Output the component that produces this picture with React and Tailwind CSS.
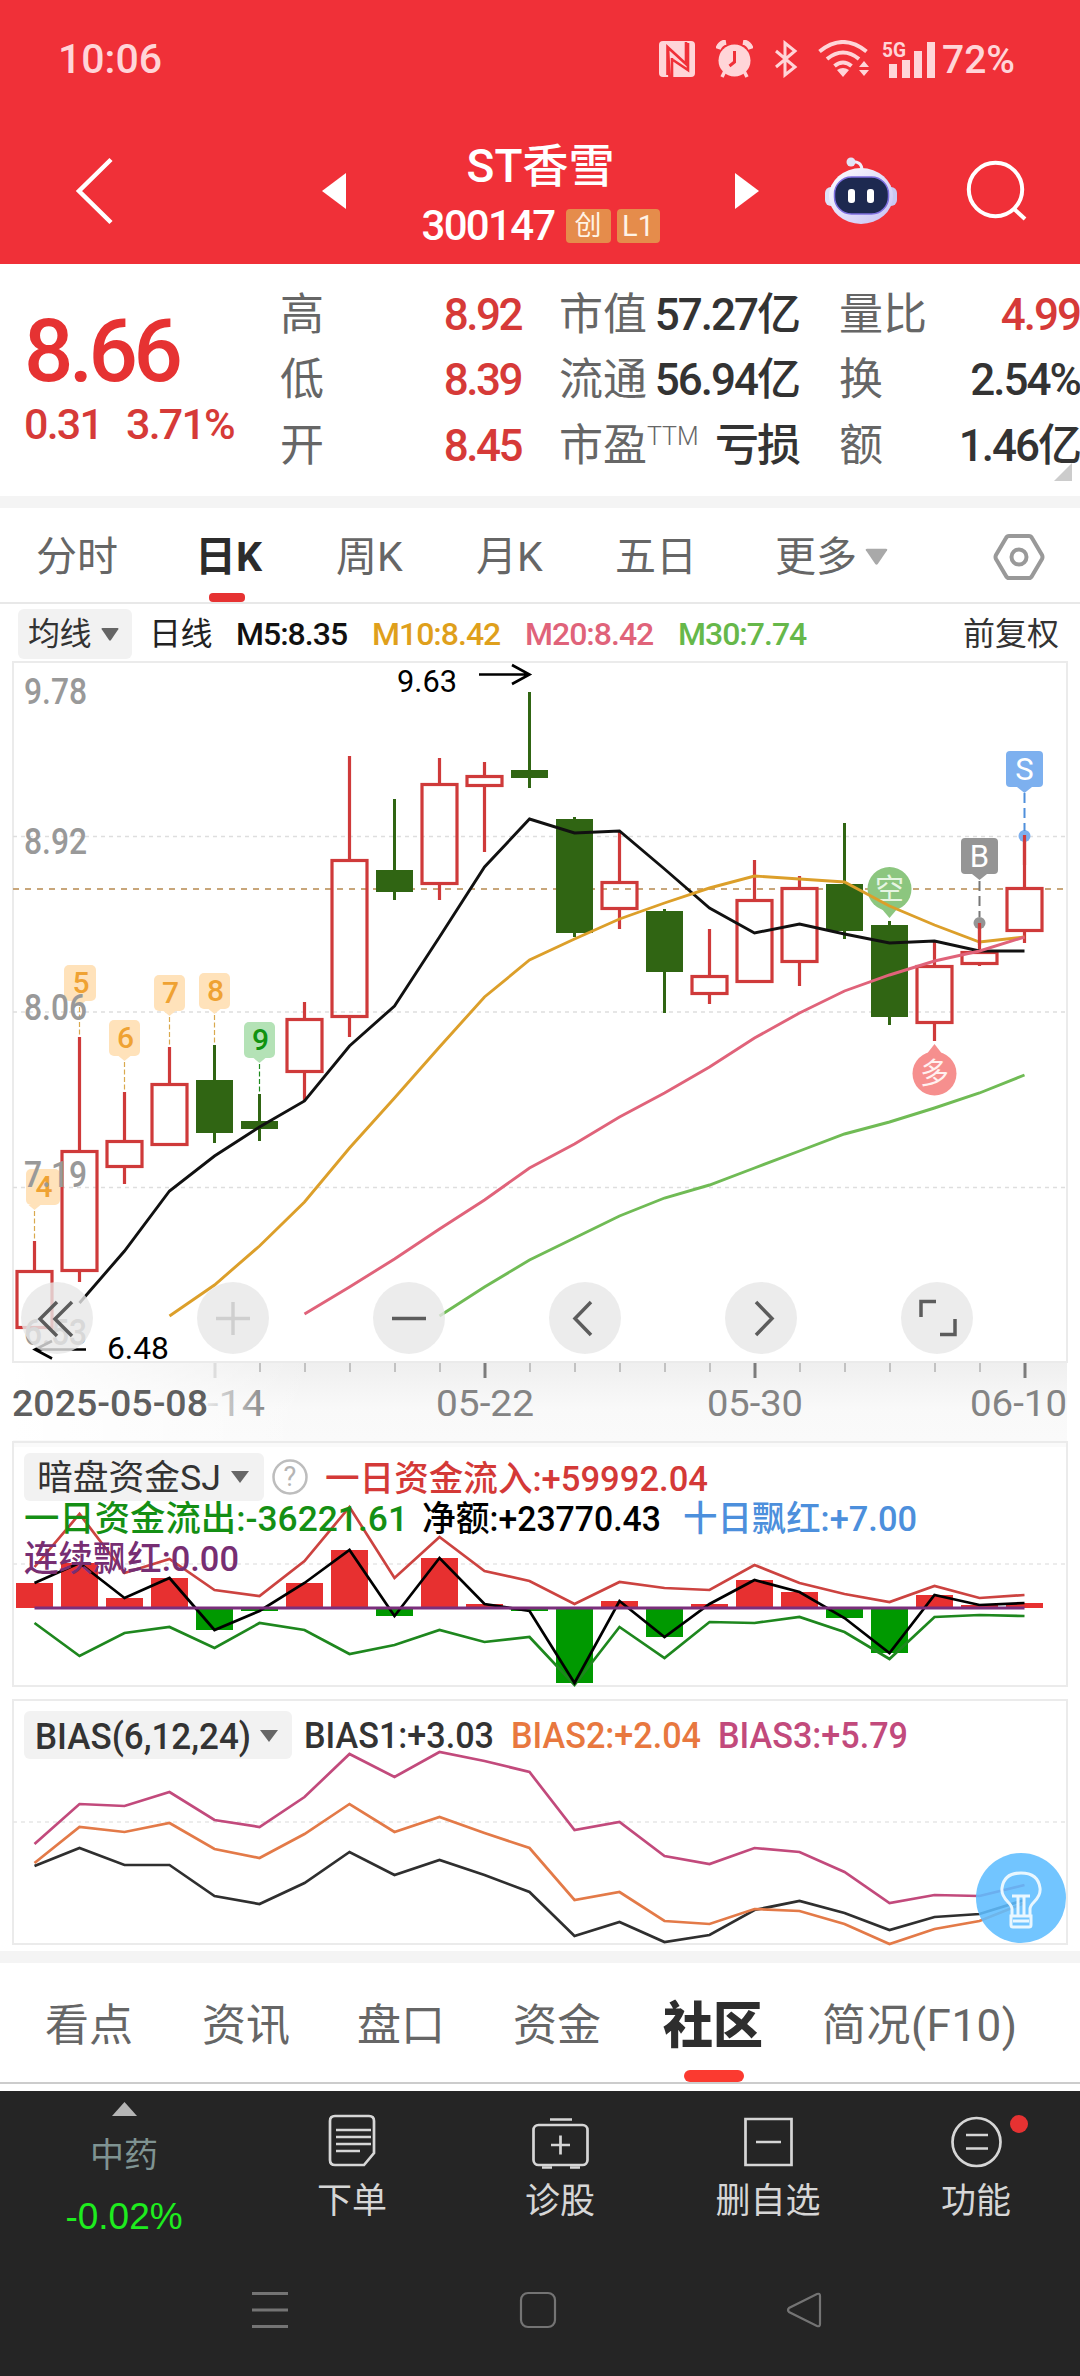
import React from 'react';

const xAt = (i) => 34.5 + i * 45;

const linePoints = (values, from = 0) => values.map((y, k) => `${xAt(from + k)},${y}`).join(' ');

// [direction, high, body top, body bottom, low]
const candles = [
  ['up', 1241, 1270, 1329, 1329],
  ['up', 1037, 1150, 1272, 1282],
  ['up', 1092, 1140, 1168, 1184],
  ['up', 1047, 1083, 1146, 1146],
  ['down', 1045, 1080, 1133, 1143],
  ['down', 1094, 1121, 1129, 1141],
  ['up', 1002, 1018, 1073, 1101],
  ['up', 756, 859, 1018, 1037],
  ['down', 799, 870, 892, 900],
  ['up', 758, 783, 885, 900],
  ['up', 762, 775, 787, 852],
  ['down', 692, 770, 778, 788],
  ['down', 817, 819, 933, 937],
  ['up', 832, 881, 910, 929],
  ['down', 909, 911, 972, 1013],
  ['up', 929, 975, 995, 1004],
  ['up', 860, 899, 983, 983],
  ['up', 876, 887, 963, 986],
  ['down', 823, 884, 931, 939],
  ['down', 921, 925, 1017, 1025],
  ['up', 942, 965, 1024, 1041],
  ['up', 923, 951, 965, 966],
  ['up', 835, 887, 932, 943],
];

const averages = [
  { color: '#111111', from: 1, values: [1303, 1251, 1191, 1156, 1127, 1101, 1046, 1006, 937, 867, 819, 833, 831, 869, 908, 933, 924, 934, 943, 941, 951, 951] },
  { color: '#dc9f2a', from: 3, values: [1316, 1285, 1246, 1202, 1148, 1098, 1047, 997, 960, 939, 919, 903, 888, 876, 879, 882, 906, 925, 942, 937] },
  { color: '#e0637a', from: 6, values: [1314, 1287, 1259, 1229, 1200, 1168, 1144, 1117, 1093, 1067, 1038, 1013, 991, 975, 961, 951, 937] },
  { color: '#70bb55', from: 9, values: [1316, 1287, 1260, 1238, 1216, 1198, 1185, 1168, 1151, 1134, 1122, 1108, 1093, 1075] },
];

const netFlow = [1583, 1563, 1598, 1578, 1630, 1611, 1583, 1550, 1616, 1558, 1604, 1611, 1683, 1601, 1637, 1604, 1580, 1592, 1618, 1653, 1595, 1605, 1603];
const inFlow = [1567, 1514, 1573, 1559, 1590, 1596, 1561, 1507, 1578, 1537, 1571, 1581, 1604, 1582, 1588, 1590, 1565, 1583, 1594, 1602, 1586, 1598, 1595];
const outFlow = [1623, 1656, 1633, 1627, 1648, 1623, 1630, 1654, 1645, 1630, 1642, 1637, 1685, 1627, 1658, 1622, 1623, 1617, 1632, 1659, 1617, 1615, 1616];

const bias = [
  { color: '#c24a7c', values: [1844, 1804, 1806, 1792, 1820, 1827, 1797, 1754, 1777, 1752, 1761, 1772, 1830, 1822, 1856, 1864, 1848, 1852, 1872, 1903, 1895, 1896, 1885] },
  { color: '#2f2f2f', values: [1866, 1848, 1865, 1865, 1896, 1904, 1883, 1852, 1875, 1860, 1875, 1892, 1936, 1922, 1942, 1935, 1910, 1901, 1913, 1930, 1917, 1914, 1900] },
  { color: '#e37a48', values: [1863, 1827, 1832, 1823, 1849, 1858, 1834, 1804, 1832, 1817, 1833, 1848, 1900, 1892, 1921, 1924, 1909, 1911, 1924, 1944, 1929, 1921, 1903] },
];

// nine-turn counters above the first candles
const counters = [
  { n: 4, x: 26, y: 1169, w: 34, i: 0, to: 1241 },
  { n: 5, x: 64, y: 965, w: 32, i: 1, to: 1037 },
  { n: 6, x: 109, y: 1020, w: 31, i: 2, to: 1092 },
  { n: 7, x: 154, y: 975, w: 31, i: 3, to: 1047 },
  { n: 8, x: 199, y: 973, w: 31, i: 4, to: 1045 },
  { n: 9, x: 244, y: 1022, w: 31, i: 5, to: 1094 },
];

function T({ x, y, w, size = 35, fill, weight = 400, children }) {
  return (
    <text x={x} y={y} textLength={w} lengthAdjust="spacingAndGlyphs" fontSize={size} fontWeight={weight} fill={fill}>
      {children}
    </text>
  );
}

function Caret({ className }) {
  return (
    <svg viewBox="0 0 18 13" className={className} fill="currentColor">
      <path d="M1.5 0h15q1.5 0 .8 1.3L10 12q-1 1.3-2 0L.7 1.3Q0 0 1.5 0z" />
    </svg>
  );
}

function StatusBar() {
  return (
    <div className="flex h-[118px] items-center pl-[58px] text-[#ffd5d8]">
      <span className="w-[601px] text-[41px] leading-none font-medium">10:06</span>
      <svg viewBox="659 41 37 36" className="h-9 w-[37px]">
        <rect x="659" y="41" width="36" height="36" rx="4" fill="currentColor" />
        <path d="M667.500 75V47l18.500 17V42.500M668 48l1.500 29M672 58v19M686 42v22M673 60l15 10V43" stroke="#f03038" strokeWidth="2.600" fill="none" />
      </svg>
      <svg viewBox="715 40 37 38" className="ml-5 h-[38px] w-[37px]">
        <circle cx="733.500" cy="60.500" r="16" fill="currentColor" />
        <path d="M717 49q2-6 8-7M742 42q6 1 8 7" stroke="currentColor" strokeWidth="5.500" fill="none" />
        <path d="M724 71l-3 6M743 71l3 6" stroke="currentColor" strokeWidth="3.500" />
        <path d="M733.500 51v11l-5 4" stroke="#f03038" strokeWidth="3" fill="none" />
      </svg>
      <svg viewBox="773 40 24 38" className="ml-[21px] h-[38px] w-6" fill="none" stroke="currentColor" strokeWidth="3">
        <path d="M775 51l19 16-10 8V43l10 8-19 16" />
      </svg>
      <svg viewBox="817 40 52 38" className="ml-5 h-[38px] w-[52px]" fill="none" stroke="currentColor" strokeWidth="4">
        <path d="M818.500 51.500q23.500-19 47 0M826 59q16-13 32 0M833.500 66q8.500-7 17 0" />
        <path d="M836 70q6-4 12 0l-6 7zM858 67l5-6 5 6zM858 70l5 6 5-6z" fill="currentColor" stroke="none" />
      </svg>
      <svg viewBox="881 38 54 40" className="ml-3 h-10 w-[54px]" fill="currentColor">
        <text x="881" y="56" fontSize="20" fontWeight="700" textLength="24" lengthAdjust="spacingAndGlyphs">5G</text>
        <path d="M888 63h8v14h-8zM901 59h8v18h-8zM913 50h8v27h-8zM926 41h8v36h-8z" />
      </svg>
      <span className="ml-1.5 pt-0.5 text-[39px] leading-none font-medium">72%</span>
    </div>
  );
}

function TitleBar() {
  return (
    <div className="flex h-[146px] items-center text-white">
      <svg viewBox="70 150 50 80" className="ml-[70px] h-20 w-[50px]" fill="none" stroke="white" strokeWidth="4.500">
        <path d="M111 158.500L79 190l32 31.500" />
      </svg>
      <svg viewBox="0 0 24 36" className="ml-[202px] h-9 w-6" fill="white"><path d="M24 0v36L0 18z" /></svg>
      <div className="flex w-[389px] flex-col items-center">
        <div className="h-[62px] text-[46px] leading-[56px] font-medium">ST香雪</div>
        <div className="mt-2 flex h-9 items-center">
          <span className="mr-[11px] text-[42px] leading-none font-medium tracking-[-1.700px]">300147</span>
          <span className="flex h-[34px] w-[45px] items-center justify-center rounded bg-[#e58c4b] text-[27px] leading-none text-[#fff3e6]">创</span>
          <span className="ml-1.5 flex h-[34px] w-[43px] items-center justify-center rounded bg-[#e58c4b] text-[29px] leading-none text-[#fff3e6]">L1</span>
        </div>
      </div>
      <svg viewBox="0 0 24 36" className="h-9 w-6" fill="white"><path d="M0 0v36l24-18z" /></svg>
      <svg viewBox="824 154 74 70" className="ml-[65px] h-[70px] w-[74px]">
        <defs>
          <linearGradient id="shell" x1="0" y1="0" x2="1" y2="1">
            <stop offset="0" stopColor="#ffffff" />
            <stop offset="1" stopColor="#c6c0f4" />
          </linearGradient>
        </defs>
        <path d="M850 160q12-2 12 9" fill="none" stroke="#f1eefc" strokeWidth="3" />
        <circle cx="851" cy="160" r="4.500" fill="#e3e3f6" />
        <rect x="825" y="185" width="14" height="19" rx="6" fill="#dfe2f8" />
        <rect x="883" y="185" width="14" height="19" rx="6" fill="#c9c8f2" />
        <ellipse cx="861" cy="194" rx="32" ry="28" fill="url(#shell)" />
        <rect x="834.500" y="175" width="54" height="37" rx="17" fill="#1d2950" stroke="#7d6fe0" strokeWidth="1.500" />
        <rect x="848" y="187" width="7" height="14" rx="3" fill="white" />
        <rect x="867" y="187" width="7" height="14" rx="3" fill="white" />
      </svg>
      <svg viewBox="964 160 64 64" className="ml-[67px] h-16 w-16" fill="none" stroke="white" strokeWidth="4">
        <circle cx="994.500" cy="190.500" r="26.700" />
        <path d="M1012 209l12 11" />
      </svg>
    </div>
  );
}

const quoteRows = [
  { a: '高', av: '8.92', b: '市值', bv: '57.27亿', c: '量比', cv: '4.99', red: true },
  { a: '低', av: '8.39', b: '流通', bv: '56.94亿', c: '换', cv: '2.54%' },
  { a: '开', av: '8.45', b: '市盈', sup: 'TTM', bv: '亏损', c: '额', cv: '1.46亿' },
];

function Quote() {
  return (
    <div className="relative flex h-[232px] text-[#333]">
      <div className="w-[280px] pt-[47px] pl-[24px] text-[#e63232]">
        <div className="h-20 text-[87px] leading-[80px] font-medium tracking-[-4.500px]">8.66</div>
        <div className="mt-[9px] flex h-12 text-[43px] leading-[48px] font-medium tracking-[-1.800px] text-[#d63a38]">
          <span className="w-[102px]">0.31</span>
          <span>3.71%</span>
        </div>
      </div>
      <div className="flex flex-col pt-[18px]">
        {quoteRows.map((r) => (
          <div key={r.a} className="flex h-[65.500px] w-[800px] items-center text-[44px] leading-none whitespace-nowrap">
            <span className="w-[100px] text-[#666]">{r.a}</span>
            <span className="w-[141px] text-right font-medium tracking-[-2.500px] text-[#d63a38]">{r.av}</span>
            <span className="ml-[38px] flex text-[#666]">
              {r.b}
              {r.sup && <span className="text-[25px] leading-[26px] font-light">{r.sup}</span>}
            </span>
            <span className="flex-1 text-right font-medium tracking-[-2px]">{r.bv}</span>
            <span className="ml-[40px] w-[90px] text-[#666]">{r.c}</span>
            <span className={`w-[151px] text-right font-medium tracking-[-2px] ${r.red ? 'text-[#d63a38]' : ''}`}>{r.cv}</span>
          </div>
        ))}
      </div>
      <svg viewBox="0 0 18 18" className="absolute right-2 bottom-[15px] size-[18px]" fill="#ccc"><path d="M18 0v18H0z" /></svg>
    </div>
  );
}

function PeriodTabs() {
  return (
    <div className="flex h-24 items-center border-b-2 border-[#e8e8e8] pt-1 text-[41px] leading-none text-[#666]">
      <span className="ml-[36px] w-[159px]">分时</span>
      <span className="relative flex h-full w-[141px] items-center font-bold text-[#2c2c2c]">
        日K
        <span className="absolute bottom-0 left-3.5 h-[9px] w-9 rounded bg-[#e63232]" />
      </span>
      <span className="w-[140px]">周K</span>
      <span className="w-[139px]">月K</span>
      <span className="w-[160px]">五日</span>
      <span>更多</span>
      <Caret className="ml-2 h-[18px] w-[23px] text-[#a9a9a9]" />
      <svg viewBox="994 531 52 50" className="ml-[105px] h-[50px] w-[52px]" fill="none" stroke="#999" strokeWidth="4">
        <path d="M1010 535h20q2 0 3 2l10 17q1 2 0 4l-10 17q-1 2-3 2h-20q-2 0-3-2l-10-17q-1-2 0-4l10-17q1-2 3-2z" />
        <circle cx="1020" cy="556" r="7.500" />
      </svg>
    </div>
  );
}

function Legend() {
  return (
    <div className="flex h-14 items-center pt-1 text-[32px] leading-none tracking-[-0.500px] whitespace-nowrap">
      <span className="ml-[18px] flex h-[50px] w-[114px] items-center rounded-md bg-[#f2f2f2] pl-2.5 text-[#333]">
        均线
        <Caret className="ml-2.5 h-[13px] w-[18px] text-[#666]" />
      </span>
      <span className="ml-[17px] w-[87px] text-[#222]">日线</span>
      <span className="w-[136px] font-medium tracking-[-1px] text-[#111]">M5:8.35</span>
      <span className="w-[153px] font-medium tracking-[-1px] text-[#dfa01c]">M10:8.42</span>
      <span className="w-[153px] font-medium tracking-[-1px] text-[#e0637a]">M20:8.42</span>
      <span className="w-[285px] font-medium tracking-[-1px] text-[#66b84a]">M30:7.74</span>
      <span className="tracking-normal text-[#333]">前复权</span>
    </div>
  );
}

function CandleChart() {
  return (
    <svg viewBox="0 660 1080 780" className="block h-[780px] w-full">
      <defs>
        <linearGradient id="axisV" x1="0" y1="0" x2="0" y2="1">
          <stop offset="0" stopColor="#efefef" />
          <stop offset="0.600" stopColor="#f9f9f9" />
          <stop offset="1" stopColor="#fafafa" />
        </linearGradient>
        <linearGradient id="axisH" x1="0" y1="0" x2="1" y2="0">
          <stop offset="0" stopColor="#fff" />
          <stop offset="1" stopColor="#fff" stopOpacity="0" />
        </linearGradient>
        <linearGradient id="dateFade" gradientUnits="userSpaceOnUse" x1="200" y1="0" x2="265" y2="0">
          <stop offset="0" stopColor="#999" stopOpacity="0.100" />
          <stop offset="1" stopColor="#888" />
        </linearGradient>
      </defs>
      <rect x="13" y="1363" width="1054" height="77" fill="url(#axisV)" />
      <rect x="13" y="1363" width="300" height="77" fill="url(#axisH)" />
      <rect x="13" y="662" width="1054" height="700" fill="none" stroke="#ebebeb" strokeWidth="2" />
      <g stroke="#dedede" strokeWidth="1.300" strokeDasharray="4 4">
        <path d="M13 836.500h1054M13 1012h1054M13 1187.500h1054" />
      </g>
      <path d="M13 889h1054" stroke="#c8a67a" strokeWidth="1.800" strokeDasharray="6 6" />

      {candles.map(([dir, high, top, bottom, low], i) => {
        const x = xAt(i);
        if (dir === 'down') {
          return (
            <g key={i} fill="#306513">
              <rect x={x - 1.5} y={high} width="3" height={low - high} />
              <rect x={x - 18.5} y={top} width="37" height={bottom - top} />
            </g>
          );
        }
        return (
          <g key={i} stroke="#cf3a3a" strokeWidth="3.200" fill="none">
            <path d={`M${x} ${high}V${top}M${x} ${bottom}V${low}`} />
            <rect x={x - 17.5} y={top + 1.5} width="35" height={bottom - top - 3} />
          </g>
        );
      })}

      {counters.map((c) => {
        const green = c.n === 9;
        const x = xAt(c.i);
        return (
          <g key={c.n}>
            <g fill={green ? '#b4e2b6' : '#ffe2ba'}>
              <rect x={c.x} y={c.y} width={c.w} height="36" rx="5" />
              <path d={`M${x - 6} ${c.y + 36}h12l-6 5z`} />
            </g>
            <path d={`M${x} ${c.y + 42}V${c.to}`} stroke={green ? '#1d8a1d' : '#d9a94e'} strokeWidth="1.200" strokeDasharray="5 2.500" />
            <text x={c.x + c.w / 2 + 1} y={c.y + 28} textAnchor="middle" fontSize="30" fontWeight="500" fill={green ? '#109310' : '#efa233'}>{c.n}</text>
          </g>
        );
      })}

      <g fill="#8cc67f">
        <circle cx="889.500" cy="889" r="22" />
        <path d="M881 908h17l-8.500 10z" />
      </g>
      <text x="889.500" y="900" textAnchor="middle" fontSize="29" fill="#e6f5e2">空</text>
      <g fill="#f68f8e">
        <circle cx="934.500" cy="1073.500" r="22" />
        <path d="M926 1055h17l-8.500-11z" />
      </g>
      <text x="934.500" y="1084" textAnchor="middle" fontSize="29" fill="#fff1f0">多</text>

      {averages.map((a) => (
        <polyline key={a.color} points={linePoints(a.values, a.from)} fill="none" stroke={a.color} strokeWidth="2.900" />
      ))}

      <g fill="#959595">
        <rect x="961" y="838" width="37" height="36" rx="4" />
        <path d="M972 874h15l-7.500 6z" />
        <circle cx="979.500" cy="923" r="6" />
      </g>
      <path d="M979.500 881v36" stroke="#777" strokeWidth="2" strokeDasharray="10 5" />
      <text x="979.500" y="867" textAnchor="middle" fontSize="31" fill="#fff">B</text>
      <g fill="#7db0ef">
        <rect x="1006" y="751" width="37" height="36" rx="4" />
        <path d="M1017 787h15l-7.500 6z" />
        <circle cx="1024.500" cy="836" r="6" />
      </g>
      <path d="M1024.500 793v38" stroke="#4f8fdb" strokeWidth="2" strokeDasharray="10 5" />
      <path d="M979.500 923v22M1024.500 835v30" stroke="#cf3a3a" strokeWidth="3.200" />
      <text x="1024.500" y="780" textAnchor="middle" fontSize="31" fill="#fff">S</text>

      <T x={24} y={704} w={63} size={36} fill="#999" weight={500}>9.78</T>
      <T x={24} y={854} w={63} size={36} fill="#999" weight={500}>8.92</T>
      <T x={24} y={1020} w={63} size={36} fill="#999" weight={500}>8.06</T>
      <T x={24} y={1187} w={63} size={36} fill="#999" weight={500}>7.19</T>
      <T x={24} y={1345} w={63} size={36} fill="#999" weight={500}>6.53</T>

      <T x={397} y={692} w={60} size={31} fill="#000">9.63</T>
      <path d="M479 674.500h50M512 665l17.500 9.500L512 684" fill="none" stroke="#000" strokeWidth="2.600" />
      <T x={107} y={1359} w={62} size={31} fill="#000">6.48</T>
      <path d="M86 1349.500H36M52 1341l-17 8.500 17 9" fill="none" stroke="#000" strokeWidth="2.600" />

      {candles.map((_, i) => {
        if (i < 4) return null;
        const major = (i - 4) % 6 === 0;
        return (
          <path
            key={i}
            d={`M${xAt(i) + 0.5} 1363v${major ? 15 : 9}`}
            stroke={i === 4 ? '#ddd' : major ? '#7c7c7c' : '#c2c2c2'}
            strokeWidth={major ? 3 : 2}
          />
        );
      })}
      <T x={12} y={1416} w={196} size={36} fill="#5f5f5f" weight={500}>2025-05-08</T>
      <T x={207} y={1416} w={58} size={36} fill="url(#dateFade)">-14</T>
      <T x={436} y={1416} w={98} size={36} fill="#848484">05-22</T>
      <T x={707} y={1416} w={96} size={36} fill="#848484">05-30</T>
      <T x={970} y={1416} w={97} size={36} fill="#848484">06-10</T>
    </svg>
  );
}

const controls = [
  { key: 'oldest', d: 'M36 20L19 37l17 17M51 20L34 37l17 17' },
  { key: 'zoom-in', d: 'M36 20v33M19 36.500h34', faint: true },
  { key: 'zoom-out', d: 'M19 36.500h34' },
  { key: 'prev', d: 'M42 20L26 36.500 42 53' },
  { key: 'next', d: 'M31 20l16 16.500L31 53' },
  { key: 'full', d: 'M20 35V19.500h15M54 37v15.500H39' },
];

function ChartControls() {
  return (
    <div className="absolute top-[622px] left-[21px] flex gap-[104px]">
      {controls.map((c) => (
        <button key={c.key} className="size-[72px] rounded-full bg-[#e7e7e7]/80">
          <svg viewBox="0 0 72 72" className="size-[72px]" fill="none" stroke={c.faint ? '#cfcfcf' : '#5c5c5c'} strokeWidth="3.500">
            <path d={c.d} />
          </svg>
        </button>
      ))}
    </div>
  );
}

function FlowPanel() {
  return (
    <svg viewBox="0 1440 1080 250" className="block h-[250px] w-full">
      <rect x="13" y="1440" width="1054" height="7" fill="#fafafa" />
      <rect x="13" y="1442" width="1054" height="244" fill="none" stroke="#ebebeb" strokeWidth="2" />
      <path d="M13 1564h1054" stroke="#e6e6e6" strokeWidth="1.500" strokeDasharray="4 4" />
      {netFlow.map((y, i) => (
        <rect
          key={i}
          x={xAt(i) - 18.5}
          y={Math.min(y, 1608)}
          width="37"
          height={Math.abs(y - 1608)}
          fill={y < 1608 ? '#e73030' : '#009900'}
        />
      ))}
      <g fill="none" strokeWidth="2.700">
        <polyline points={linePoints(inFlow)} stroke="#cc4340" />
        <polyline points={linePoints(outFlow)} stroke="#1e871e" />
        <polyline points={linePoints(netFlow)} stroke="#000" />
        <path d="M34.500 1608H1024.500" stroke="#7a2f7c" strokeWidth="3" />
      </g>
      <rect x="24" y="1453" width="240" height="48" rx="6" fill="#f2f2f2" />
      <T x={37} y={1490} w={184} fill="#333">暗盘资金SJ</T>
      <path d="M231 1471h18l-9 12z" fill="#666" />
      <circle cx="290" cy="1477" r="16.500" fill="none" stroke="#bdbdbd" strokeWidth="2.500" />
      <text x="290" y="1486" textAnchor="middle" fontSize="27" fill="#b5b5b5">?</text>
      <T x={325} y={1491} w={383} fill="#d43937" weight={500}>一日资金流入:+59992.04</T>
      <T x={24} y={1531} w={384} fill="#148f14" weight={500}>一日资金流出:-36221.61</T>
      <T x={422} y={1531} w={239} fill="#000" weight={500}>净额:+23770.43</T>
      <T x={683} y={1531} w={234} fill="#4c8fdc" weight={500}>十日飘红:+7.00</T>
      <T x={24} y={1571} w={215} fill="#772e73" weight={500}>连续飘红:0.00</T>
    </svg>
  );
}

function BiasPanel() {
  return (
    <div className="relative">
      <svg viewBox="0 1690 1080 261" className="block h-[261px] w-full">
        <rect x="13" y="1700" width="1054" height="244" fill="none" stroke="#ebebeb" strokeWidth="2" />
        <path d="M13 1822h1054" stroke="#e6e6e6" strokeWidth="1.500" strokeDasharray="4 4" />
        {bias.map((b) => (
          <polyline key={b.color} points={linePoints(b.values)} fill="none" stroke={b.color} strokeWidth="2.700" />
        ))}
        <rect x="24" y="1711" width="268" height="48" rx="6" fill="#f2f2f2" />
        <T x={35} y={1749} w={216} size={36} fill="#333" weight={500}>BIAS(6,12,24)</T>
        <path d="M260 1730h18l-9 12z" fill="#666" />
        <T x={304} y={1748} w={190} size={36} fill="#333" weight={500}>BIAS1:+3.03</T>
        <T x={511} y={1748} w={190} size={36} fill="#e8783f" weight={500}>BIAS2:+2.04</T>
        <T x={718} y={1748} w={190} size={36} fill="#c24a7c" weight={500}>BIAS3:+5.79</T>
      </svg>
      <svg viewBox="0 0 90 90" className="absolute top-[163px] left-[976px] size-[90px]">
        <circle cx="45" cy="45" r="45" fill="#5ebdff" fillOpacity="0.880" />
        <g fill="none" stroke="#e9f7ff" strokeWidth="3">
          <path d="M36 63v-7q0-3-4-7-7-7-6-14 2-15 19-15t19 15q1 7-6 14-4 4-4 7v7" />
          <path d="M36 43h18M42 44v19M48 44v19M35 63h20v9q0 2-2 2H37q-2 0-2-2z M37 68h16" />
        </g>
      </svg>
    </div>
  );
}

function InfoTabs() {
  return (
    <div className="flex h-[128px] flex-col bg-white">
      <div className="flex h-[121px] items-center border-b-2 border-[#ccc] pt-1.5 text-[44px] leading-none whitespace-nowrap text-[#666]">
        <span className="ml-[45px] w-[157px]">看点</span>
        <span className="w-[155px]">资讯</span>
        <span className="w-[156px]">盘口</span>
        <span className="w-[150px]">资金</span>
        <span className="relative flex h-full w-[159px] items-center text-[50px] font-black text-[#2e2e2e]">
          社区
          <span className="absolute bottom-0 left-[21px] h-3 w-[60px] rounded-md bg-[#fb3a30]" />
        </span>
        <span className="tracking-[0.500px]">简况(F10)</span>
      </div>
    </div>
  );
}

const actions = [
  {
    label: '下单',
    icon: (
      <>
        <path d="M11 6h34q5 0 5 5v32L40 55H11q-5 0-5-5V11q0-5 5-5z" />
        <path d="M12 20h35M12 27h35M12 34h35M12 41h24" />
      </>
    ),
  },
  {
    label: '诊股',
    icon: (
      <>
        <rect x="1.500" y="15" width="54" height="40" rx="5" />
        <path d="M18 9.500h22M19 35h19M28.500 25.500v19M10 57.500h10M38 57.500h10" />
      </>
    ),
  },
  { label: '删自选', icon: <path d="M5.500 9h46v46h-46zM16 32h25" /> },
  {
    label: '功能',
    icon: (
      <>
        <circle cx="28.500" cy="32" r="24" />
        <path d="M18 25h22M18 38.500h22" />
      </>
    ),
    dot: true,
  },
];

function ActionBar() {
  return (
    <div className="flex h-[148px]">
      <div className="flex w-[248px] flex-col items-center pt-[11px] leading-none">
        <svg viewBox="0 0 25 14" className="h-3.5 w-[25px]" fill="#b5b5b5"><path d="M12.500 0L25 14H0z" /></svg>
        <span className="mt-[22px] text-[34px] text-[#7f9392]">中药</span>
        <span className="mt-[26px] font-['Liberation_Sans'] text-[37px] text-[#1eed1e]">-0.02%</span>
      </div>
      {actions.map((a) => (
        <div key={a.label} className="relative flex w-[208px] flex-col items-center pt-[19px] text-[#d6d6d6]">
          <svg viewBox="0 0 57 62" className="h-[62px] w-[57px]" fill="none" stroke="currentColor" strokeWidth="2.700">
            {a.icon}
          </svg>
          <span className="mt-3 text-[35px] leading-none">{a.label}</span>
          {a.dot && <span className="absolute top-[24px] left-[138px] size-[18px] rounded-full bg-[#e63232]" />}
        </div>
      ))}
    </div>
  );
}

function SystemNav() {
  return (
    <div className="flex h-[137px] items-center pt-1 pl-[252px]">
      <svg viewBox="0 0 36 40" className="h-10 w-9" stroke="#747474" strokeWidth="3"><path d="M0 3.500h36M0 20h36M0 36.500h36" /></svg>
      <svg viewBox="0 0 38 38" className="ml-[231px] size-[38px]" fill="none" stroke="#747474" strokeWidth="2.200">
        <rect x="2" y="2" width="34" height="34" rx="7" />
      </svg>
      <svg viewBox="0 0 36 38" className="ml-[229px] h-[38px] w-9" fill="none" stroke="#747474" strokeWidth="2.200">
        <path d="M31 3q3-1 3 2v28q0 3-3 2L3 21q-2-2 0-4z" />
      </svg>
    </div>
  );
}

export default function App() {
  return (
    <div className="h-[2376px] w-[1080px] overflow-hidden bg-white font-[Roboto,'Noto_Sans_CJK_SC',sans-serif]">
      <header className="bg-[#f03038]">
        <StatusBar />
        <TitleBar />
      </header>
      <Quote />
      <div className="h-3 bg-[#f4f4f4]" />
      <PeriodTabs />
      <Legend />
      <div className="relative">
        <CandleChart />
        <ChartControls />
      </div>
      <FlowPanel />
      <BiasPanel />
      <div className="h-3 bg-[#f4f4f4]" />
      <InfoTabs />
      <footer className="bg-[#252525]">
        <ActionBar />
        <SystemNav />
      </footer>
    </div>
  );
}
